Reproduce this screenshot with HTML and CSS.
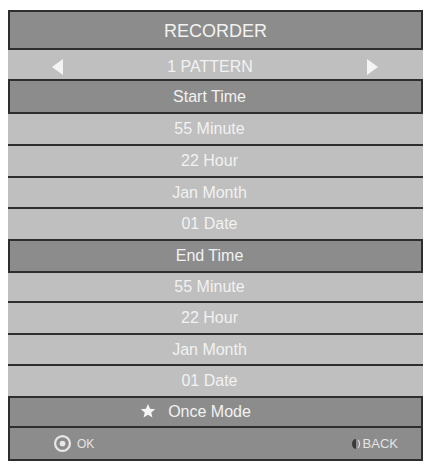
FILE: index.html
```html
<!DOCTYPE html>
<html lang="en">
  <head>
    <meta charset="UTF-8" />
    <meta name="viewport" content="width=device-width, initial-scale=1.0" />
    <title>Recorder</title>
    <link rel="stylesheet" href="styles.css">
  </head>
  <body>
    <div class="menu">
      <div class="dark title">RECORDER</div>
      <div class="light pattern">
        <span class="arrow arrow-left"></span>
        <span>1 PATTERN</span>
        <span class="arrow arrow-right"></span>
      </div>

      <div class="dark head start">Start Time</div>
      <div class="light sep h32">55 Minute</div>
      <div class="light sep h32">22 Hour</div>
      <div class="light sep h31">Jan Month</div>
      <div class="light h30">01 Date</div>

      <div class="dark head end">End Time</div>
      <div class="light sep h30">55 Minute</div>
      <div class="light sep h32">22 Hour</div>
      <div class="light sep h31">Jan Month</div>
      <div class="light h30">01 Date</div>

      <div class="dark head mode">
        <svg class="star" width="16" height="16" viewBox="0 0 24 24">
          <path d="M12 1.5l3.1 7.1 7.7.6-5.9 5 1.8 7.5L12 17.7l-6.7 4 1.8-7.5-5.9-5 7.7-.6z" fill="#f4f4f4" />
        </svg>
        <span>Once Mode</span>
      </div>

      <div class="dark footer">
        <div class="key">
          <svg width="19" height="19" viewBox="0 0 20 20">
            <circle cx="10" cy="10" r="7.8" fill="none" stroke="#e8e8e8" stroke-width="2.4" />
            <circle cx="10" cy="10" r="3" fill="#e8e8e8" />
          </svg>
          <span class="key-label">OK</span>
        </div>
        <div class="key">
          <svg width="10" height="12" viewBox="0 0 10 12">
            <path d="M5 1 A4 5 0 0 0 5 11 Z" fill="#3a3a3a" />
            <path d="M7 2 A4 5 0 0 1 7 10" fill="none" stroke="#d8d8d8" stroke-width="1.2" />
          </svg>
          <span class="key-label back">BACK</span>
        </div>
      </div>
    </div>
  </body>
</html>
```

FILE: styles.css
```css
body {
  margin: 0;
  padding: 10px 3px 0 8px;
  background: #ffffff;
  font-family: 'Liberation Sans', Arial, sans-serif;
}
.menu {
  width: 415px;
  display: flex;
  flex-direction: column;
}
.dark,
.light {
  box-sizing: border-box;
  display: flex;
  align-items: center;
  justify-content: center;
  color: #f2f2f2;
  font-size: 16px;
  padding-right: 12px;
}
.dark {
  background: #8c8c8c;
  border: 2px solid #2e2e2e;
}
.light {
  background: #bfbfbf;
}
.sep {
  border-bottom: 2px solid #2e2e2e;
}
.h30 {
  height: 30px;
}
.h31 {
  height: 31px;
}
.h32 {
  height: 32px;
}
.title {
  height: 40px;
  font-size: 18px;
  padding: 2px 0 0 0;
}
.pattern {
  height: 29px;
  justify-content: space-between;
  padding: 4px 45px 0 44px;
}
.pattern span:nth-child(2) {
  margin-right: 10px;
}
.start {
  height: 35px;
}
.end {
  height: 34px;
}
.mode {
  height: 32px;
  gap: 12px;
  padding-right: 40px;
}
.star {
  margin-top: -2px;
}
.footer {
  height: 33px;
  border-top: none;
  justify-content: space-between;
  padding: 0 23px 0 43px;
}
.arrow {
  width: 0;
  height: 0;
  border-top: 8px solid transparent;
  border-bottom: 8px solid transparent;
}
.arrow-left {
  border-right: 11px solid #f4f4f4;
}
.arrow-right {
  border-left: 11px solid #f4f4f4;
}
.key {
  display: flex;
  align-items: center;
  gap: 5px;
}
.key-label {
  font-size: 12px;
  color: #e4e4e4;
}
.back {
  font-size: 13px;
  margin-left: -3px;
}
```
